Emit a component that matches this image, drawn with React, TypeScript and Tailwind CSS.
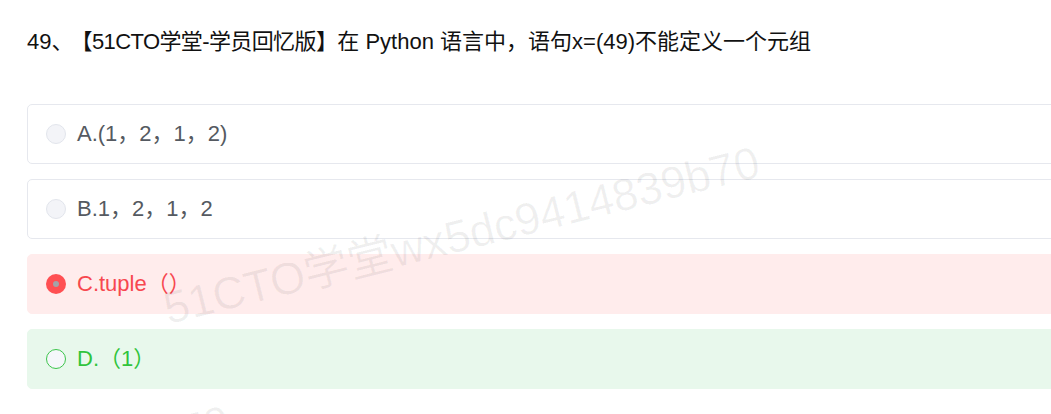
import React from "react";

const font = { fontFamily: '"Liberation Sans", Arial, "Noto Sans CJK SC", sans-serif' };

type Opt = { label: string; state: "normal" | "wrong" | "right" };

const options: Opt[] = [
  { label: "A.(1，2，1，2)", state: "normal" },
  { label: "B.1，2，1，2", state: "normal" },
  { label: "C.tuple（）", state: "wrong" },
  { label: "D.（1）", state: "right" },
];

function Radio({ state }: { state: Opt["state"] }) {
  if (state === "wrong") {
    return (
      <span className="flex h-5 w-5 shrink-0 items-center justify-center rounded-full bg-[#ff4f52]">
        <span className="h-[6px] w-[6px] rounded-full bg-[#a3a3a8]" />
      </span>
    );
  }
  if (state === "right") {
    return <span className="h-5 w-5 shrink-0 rounded-full border border-[#3cc54b] bg-[#f5f7fa]" />;
  }
  return <span className="h-5 w-5 shrink-0 rounded-full border border-[#e2e5ec] bg-[#f3f4f8]" />;
}

export default function App() {
  return (
    <div className="relative h-[414px] w-[1051px] overflow-hidden bg-white" style={font}>
      <div className="pl-[27px] pt-[29px]">
        <div className="whitespace-nowrap text-[22px] leading-[26px] text-[#111]">
          49、<span className="ml-[8px] tracking-[-0.6px]">【51CTO学堂-学员回忆版】</span>在 Python 语言中，语句x=(49)不能定义一个元组
        </div>
        <div className="mt-[49px] flex w-[1100px] flex-col gap-[15px]">
          {options.map((o) => {
            const cls =
              o.state === "wrong"
                ? "border-[#ffecec] bg-[#ffecec] text-[#f7474f]"
                : o.state === "right"
                ? "border-[#e8f8ec] bg-[#e8f8ec] text-[#30c43c]"
                : "border-[#e6e8ee] bg-white text-[#555a61]";
            return (
              <div
                key={o.label}
                className={`flex h-[60px] items-center gap-[11px] rounded-[5px] border pl-[18px] text-[22px] ${cls}`}
              >
                <Radio state={o.state} />
                <span className="leading-none">{o.label}</span>
              </div>
            );
          })}
        </div>
      </div>
      <div className="pointer-events-none absolute left-[170px] top-[286px] origin-bottom-left -rotate-[14deg] whitespace-nowrap text-[45px] leading-none text-[rgba(0,0,0,0.06)]">
        51CTO学堂wx5dc9414839b70
      </div>
      <div className="pointer-events-none absolute left-[-360px] top-[545px] origin-bottom-left -rotate-[14deg] whitespace-nowrap text-[45px] leading-none text-[rgba(0,0,0,0.06)]">
        51CTO学堂wx5dc9414839b70
      </div>
    </div>
  );
}
